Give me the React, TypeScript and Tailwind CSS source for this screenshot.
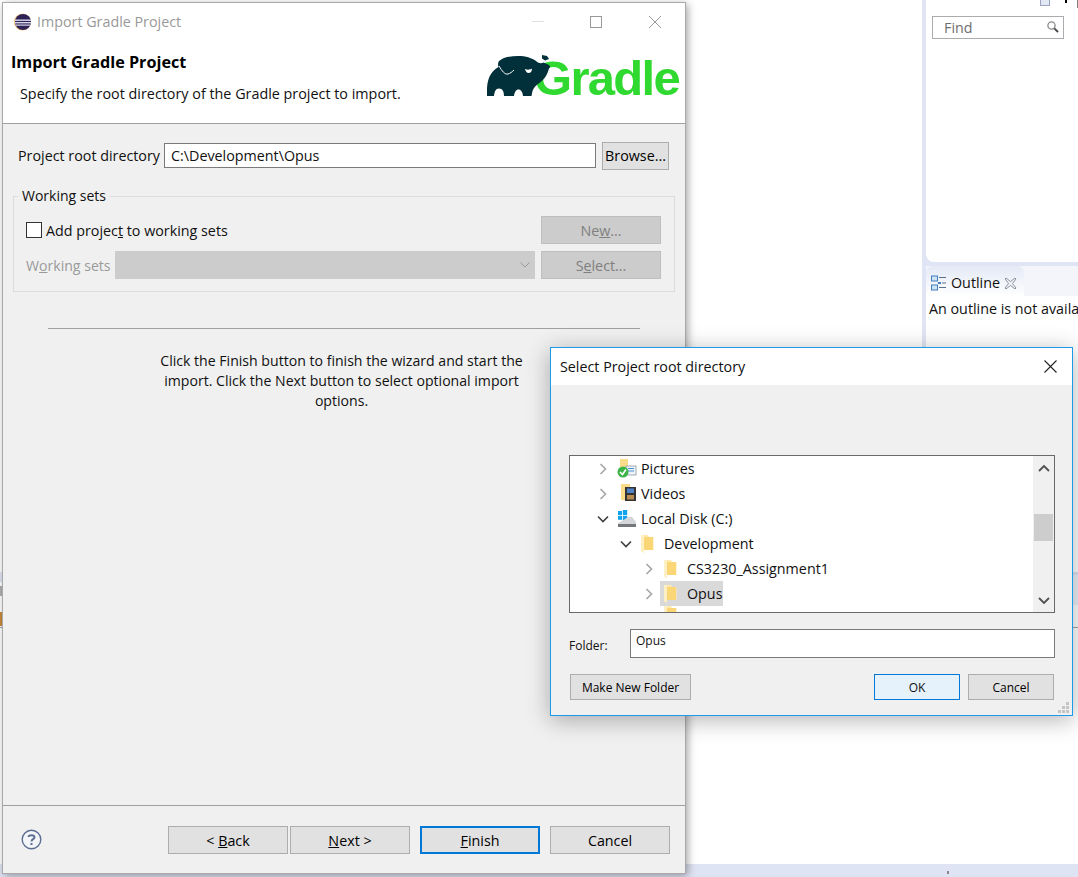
import React from "react";

const font = { fontFamily: '"Open Sans", "Noto Sans", sans-serif' };

function Eclipse() {
  return (
    <svg width="20" height="20" viewBox="0 0 20 20">
      <circle cx="9.5" cy="10" r="8.6" fill="#f4c27c" />
      <circle cx="10" cy="10" r="8" fill="#2c2255" />
      <rect x="2" y="7.5" width="16" height="1.4" fill="#d9d9ec" />
      <rect x="1.8" y="10" width="16.4" height="1.4" fill="#d9d9ec" />
      <rect x="2.6" y="12.5" width="14.8" height="1.2" fill="#d9d9ec" />
    </svg>
  );
}

function Elephant() {
  return (
    <svg width="66" height="44" viewBox="0 0 66 44" className="shrink-0 relative z-10 mb-[1px]">
      <path
        fill="#02303a"
        d="M0 41 C-0.5 32 0.5 24 4 19 C6 15.5 9 13.5 11.5 12 C10.5 9 11 6.5 13.5 5 C18 2 26 0.5 34 1 C41 1.5 47 4 51 7.5 C53 8.5 55 8.5 56.5 7.5 L61 9.5 C63 10.5 64 12 62 13.5 C60.5 19 58 24 53 27.5 C49 30 46.5 33 45.5 36 L44.5 41 L36 41 C35.5 37 34 34.5 31.5 34.5 C29 34.5 27.5 37 27 41 L17 41 C17 36.5 15.5 33.5 12 33.5 C8.5 33.5 7.5 37 7 41 Z"
      />
      <path fill="#02303a" d="M55 0 L60 1 L62 4 L58 5.5 L55 3.5 Z" />
      <path fill="none" stroke="#fff" strokeWidth="1" d="M12 11 C15 16 18 20 21 19 C23 18.5 25 17 27 15" />
      <path fill="#fff" d="M38 14 C40 15 43 15 45 13.5 C45 17 43 18.5 41 18 C39.5 17.5 38.5 16 38 14 Z" />
    </svg>
  );
}

function Folder() {
  return (
    <svg width="13" height="20" viewBox="0 0 13 20" className="shrink-0 -ml-[2px]">
      <path d="M0 1 H7 L8 3 H12.5 V16 H3 V19 L0 17 Z" fill="#ffe9ad" />
      <path d="M3 3 H12 V16 H3 Z" fill="#fbd676" />
      <path d="M0 1 H3 V19 L0 17 Z" fill="#fff0c4" />
    </svg>
  );
}

function Chevron({ open, dark }: { open?: boolean; dark?: boolean }) {
  return (
    <svg width="12" height="12" viewBox="0 0 12 12" className="shrink-0">
      <polyline
        points={open ? "1,3.5 6,8.5 11,3.5" : "3.5,1 8.5,6 3.5,11"}
        fill="none"
        stroke={dark ? "#3f3f3f" : "#a6a6a6"}
        strokeWidth="1.6"
      />
    </svg>
  );
}

function PicturesIcon() {
  return (
    <svg width="20" height="20" viewBox="0 0 20 20" className="shrink-0 -ml-[3px]">
      <path d="M3 0 H11 V15 H3 Z" fill="#fbdc8a" />
      <rect x="9" y="7" width="10" height="9" fill="#eef3f8" stroke="#7d8a98" strokeWidth="0.7" />
      <rect x="11" y="9" width="6" height="1" fill="#4a90d9" />
      <rect x="11" y="11.5" width="6" height="1" fill="#4a90d9" />
      <circle cx="6" cy="13" r="5.5" fill="#3cb44a" />
      <polyline points="3,13 5.5,15.5 9,10.5" fill="none" stroke="#fff" strokeWidth="1.6" />
    </svg>
  );
}

function VideosIcon() {
  return (
    <svg width="18" height="20" viewBox="0 0 18 20" className="shrink-0 -ml-[1px]">
      <path d="M2 0 H11 V17 L2 16 Z" fill="#fbdc8a" />
      <rect x="6" y="3" width="11" height="14" fill="#333" />
      <rect x="8" y="4.5" width="7" height="4.5" fill="#4f81c7" />
      <rect x="8" y="11" width="7" height="4.5" fill="#b98a52" />
    </svg>
  );
}

function DiskIcon() {
  return (
    <svg width="20" height="20" viewBox="0 0 20 20" className="shrink-0 -ml-[3px]">
      <rect x="1" y="2" width="4" height="4" fill="#12a3ee" />
      <rect x="5.8" y="1" width="4.4" height="5" fill="#12a3ee" />
      <rect x="1" y="6.8" width="4" height="4" fill="#12a3ee" />
      <rect x="5.8" y="6.8" width="4.4" height="5" fill="#12a3ee" />
      <path d="M5 12 L11 8 H15 L19 13 V17 H1 V14 Z" fill="#d4d6d8" />
      <rect x="1" y="15" width="18" height="3" fill="#74787c" />
    </svg>
  );
}

function Btn({
  children,
  w,
  primary,
  disabled,
}: {
  children: React.ReactNode;
  w: string;
  primary?: boolean;
  disabled?: boolean;
}) {
  return (
    <div
      className={
        "flex items-center justify-center h-[28px] text-[14.3px] " +
        w +
        (primary
          ? " border-2 border-[#0078d7] bg-[#e1e1e1] text-black"
          : disabled
            ? " border border-[#bfbfbf] bg-[#cccccc] text-[#7f7f7f]"
            : " border border-[#adadad] bg-[#e1e1e1] text-black")
      }
    >
      {children}
    </div>
  );
}

function TreeRow({
  indent,
  chevron,
  icon,
  label,
  selected,
}: {
  indent: string;
  chevron: React.ReactNode;
  icon: React.ReactNode;
  label: string;
  selected?: boolean;
}) {
  return (
    <div className={"flex items-center h-[25px] shrink-0 " + indent}>
      <div className="w-[23px] flex justify-start">{chevron}</div>
      <div className={"flex items-center h-[25px] pl-[6px] pr-[1px] -ml-[6px] " + (selected ? "bg-[#d9d9d9]" : "")}>
        <div className="w-[21px] flex items-center">{icon}</div>
        <span className="text-[14.3px] text-[#111] whitespace-nowrap">{label}</span>
      </div>
    </div>
  );
}

export default function App() {
  return (
    <div className="relative w-[1078px] h-[877px] overflow-hidden bg-white" style={font}>
      {/* desktop background: the workbench behind the dialogs */}
      <div className="flex flex-col w-full h-full">
        <div className="flex-1 flex justify-end items-start">
          <div className="w-[156px] h-[628px] flex flex-col bg-[#dfe5f5] pl-[4px] border-b border-[#a0a0a0]">
            <div className="h-[262px] bg-white rounded-bl-[8px] relative shrink-0">
              <div className="absolute left-[114px] top-0 w-[10px] h-[6px] bg-[#e3e8f5] border border-[#9aa6bf] border-t-0" />
              <div className="absolute left-[139px] top-0 w-[2px] h-[3px] bg-black" />
              <div className="absolute left-[151px] top-0 w-px h-[8px] bg-[#808080]" />
              <div className="absolute left-[6px] top-[16px] w-[132px] h-[23px] bg-white border border-[#ababb0] flex items-center pl-[11px] text-[14.3px] text-[#6d6d6d]">
                Find
                <svg width="14" height="14" viewBox="0 0 14 14" className="absolute right-[3px] top-[3px]">
                  <circle cx="5.5" cy="5.5" r="3.6" fill="#fff" stroke="#8a8a8a" strokeWidth="1.3" />
                  <line x1="8.3" y1="8.3" x2="12" y2="12" stroke="#444" strokeWidth="1.8" />
                </svg>
              </div>
            </div>
            <div className="h-[4px] shrink-0" />
            <div className="flex-1 flex flex-col bg-white">
              <div className="h-[30px] flex bg-[#f3f5fb] shrink-0">
                <div className="w-[98px] flex items-center pl-[5px] pt-[4px] gap-[5px] bg-gradient-to-b from-[#e4e9f5] to-white rounded-tl-[7px] rounded-tr-[7px] text-[14.3px] text-[#111]">
                  <svg width="15" height="16" viewBox="0 0 15 16" className="shrink-0">
                    <rect x="0.5" y="1" width="6" height="5" fill="#cfe3f7" stroke="#3f7fbf" />
                    <rect x="0.5" y="10" width="6" height="5" fill="#cfe3f7" stroke="#3f7fbf" />
                    <rect x="8" y="2" width="7" height="1" fill="#5a6f90" />
                    <rect x="7" y="7" width="3" height="2" fill="#3f7fbf" />
                    <rect x="11" y="7.5" width="4" height="1" fill="#5a6f90" />
                    <rect x="8" y="12" width="7" height="1" fill="#5a6f90" />
                  </svg>
                  Outline
                  <svg width="13" height="13" viewBox="0 0 13 13" className="-ml-[1px] shrink-0">
                    <path
                      d="M2 1 L6.5 4.5 L11 1 L12 2 L8.5 6.5 L12 11 L11 12 L6.5 8.5 L2 12 L1 11 L4.5 6.5 L1 2 Z"
                      fill="#eef0f4"
                      stroke="#8d93a0"
                    />
                  </svg>
                </div>
              </div>
              <div className="pl-[3px] pt-[2px] text-[14.3px] text-[#111] whitespace-nowrap overflow-hidden">
                An outline is not available.
              </div>
            </div>
          </div>
        </div>
        <div className="h-[13px] bg-[#dfe4f4] shrink-0 relative">
          <div className="absolute left-[947px] top-[7px] w-[2px] h-[3px] bg-[#8a8a8a]" />
        </div>
      </div>
      <div className="absolute left-[1073px] top-[572px] w-[5px] h-[33px] bg-[#eef1f9] border-t-[3px] border-[#dfe4f4]" />
      <div className="absolute left-0 top-[572px] w-[2px] h-[10px] bg-[#dfe4f4]" />
      <div className="absolute left-0 top-[586px] w-[2px] h-[10px] bg-[#b0b0b0]" />
      <div className="absolute left-0 top-[612px] w-[2px] h-[14px] bg-[#c98a3c]" />
      <div className="absolute left-0 top-[627px] w-[2px] h-px bg-[#a0a0a0]" />

      {/* Import Gradle Project window */}
      <div className="absolute left-[2px] top-[2px] w-[684px] h-[872px] flex flex-col border border-[#a9a9a9] bg-[#f0f0f0] shadow-[2px_2px_8px_rgba(0,0,0,0.35)]">
        <div className="h-[121px] shrink-0 bg-white border-b border-[#a0a0a0] flex flex-col">
          <div className="h-[37px] shrink-0 flex items-center pl-[10px] text-[14.3px] text-[#999999]">
            <Eclipse />
            <span className="ml-[4px] flex-1">Import Gradle Project</span>
            <div className="w-[12px] h-px bg-[#e0e0e0] mr-[46px]" />
            <div className="w-[12px] h-[12px] border border-[#999] mr-[46px]" />
            <svg width="14" height="14" viewBox="0 0 14 14" className="mr-[23px]">
              <path d="M1 1 L13 13 M13 1 L1 13" stroke="#999" strokeWidth="1" />
            </svg>
          </div>
          <div className="flex flex-1">
            <div className="flex-1">
              <div className="pl-[8px] pt-[11px] text-[16.2px] leading-[22px] font-bold text-black">Import Gradle Project</div>
              <div className="pl-[17px] pt-[11px] text-[14.35px] leading-[20px] text-[#111]">
                Specify the root directory of the Gradle project to import.
              </div>
            </div>
            <div className="flex items-end h-[60px] pt-[14px] pr-[6px]">
              <Elephant />
              <span
                className="text-[#2fd92f] text-[49px] leading-[44px] -ml-[19px] tracking-[-1.7px]"
                style={{ fontFamily: '"Liberation Sans", sans-serif', fontWeight: 700 }}
              >
                Gradle
              </span>
            </div>
          </div>
        </div>

        <div className="flex-1 flex flex-col min-h-0">
          <div className="flex items-center h-[27px] mt-[18px] pl-[15px] pr-[16px] shrink-0">
            <span className="text-[14.3px] text-[#111] w-[146px] whitespace-nowrap">Project root directory</span>
            <div className="w-[432px] h-[25px] bg-white border border-[#7a7a7a] flex items-center pl-[6px] text-[14.3px] text-[#111]">
              C:\Development\Opus
            </div>
            <div className="ml-[6px]">
              <Btn w="w-[67px]">Browse...</Btn>
            </div>
          </div>

          <fieldset className="mt-[18px] ml-[10px] mr-[10px] h-[105px] border border-[#dcdcdc] pl-[12px] pr-[13px] shrink-0">
            <legend className="ml-[-8px] px-[4px] text-[14px] leading-[18px] text-[#111]">Working sets</legend>
            <div className="flex items-center h-[28px] mt-[11px]">
              <div className="w-[16px] h-[16px] bg-white border border-[#333] shrink-0" />
              <span className="ml-[4px] text-[14.3px] text-[#111] flex-1 pt-[2px]">
                Add projec<u>t</u> to working sets
              </span>
              <Btn w="w-[120px]" disabled>
                <span className="pt-[2px]">Ne<u>w</u>...</span>
              </Btn>
            </div>
            <div className="flex items-center h-[28px] mt-[7px]">
              <span className="text-[14.1px] text-[#9a9a9a] w-[89px] shrink-0 whitespace-nowrap pt-[2px]">
                W<u>o</u>rking sets
              </span>
              <div className="w-[420px] h-[28px] bg-[#cccccc] flex items-center justify-end pr-[5px]">
                <svg width="10" height="6" viewBox="0 0 10 6">
                  <polyline points="0.5,0.5 5,5 9.5,0.5" fill="none" stroke="#999" strokeWidth="1" />
                </svg>
              </div>
              <div className="ml-[6px]">
                <Btn w="w-[120px]" disabled>
                  <span className="pt-[2px]">S<u>e</u>lect...</span>
                </Btn>
              </div>
            </div>
          </fieldset>

          <div className="mt-[36px] mx-[45px] h-px w-[592px] bg-[#a0a0a0] shrink-0" />
          <div className="mt-[22px] ml-[155px] w-[367px] text-center text-[14.1px] leading-[20px] text-[#111]">
            Click the Finish button to finish the wizard and start the import. Click the Next button to select optional
            import options.
          </div>
        </div>

        <div className="h-[68px] shrink-0 border-t border-[#a0a0a0] flex items-center pl-[18px] pr-[15px]">
          <svg width="21" height="21" viewBox="0 0 21 21" className="shrink-0">
            <circle cx="10.5" cy="10.5" r="9.3" fill="#f4f5f8" stroke="#5c6f92" strokeWidth="1.4" />
            <path d="M7.5 8 C7.5 5.5 13.5 5.5 13.5 8.2 C13.5 10.2 10.5 10.2 10.5 12.5" fill="none" stroke="#5c6f92" strokeWidth="2" />
            <rect x="9.5" y="14" width="2" height="2" fill="#5c6f92" />
          </svg>
          <div className="flex-1" />
          <div className="flex">
            <Btn w="w-[120px]">
              <span className="pt-[2px]">&lt; <u>B</u>ack</span>
            </Btn>
            <div className="ml-[2px]">
              <Btn w="w-[120px]">
                <span className="pt-[2px]"><u>N</u>ext &gt;</span>
              </Btn>
            </div>
            <div className="ml-[10px]">
              <Btn w="w-[120px]" primary>
                <span className="pt-[2px]"><u>F</u>inish</span>
              </Btn>
            </div>
            <div className="ml-[10px]">
              <Btn w="w-[120px]">
                <span className="pt-[2px]">Cancel</span>
              </Btn>
            </div>
          </div>
        </div>
      </div>

      {/* Select Project root directory dialog */}
      <div className="absolute left-[550px] top-[347px] w-[523px] h-[369px] flex flex-col border border-[#1c9be8] bg-[#f0f0f0] shadow-[0_4px_22px_rgba(0,0,0,0.3)]">
        <div className="h-[37px] shrink-0 bg-white flex items-center pl-[9px] pr-[15px] text-[14.3px] text-[#111]">
          <span className="flex-1">Select Project root directory</span>
          <svg width="13" height="13" viewBox="0 0 13 13">
            <path d="M0.5 0.5 L12.5 12.5 M12.5 0.5 L0.5 12.5" stroke="#222" strokeWidth="1.1" />
          </svg>
        </div>
        <div className="flex-1 flex flex-col pl-[18px] pr-[17px]">
          <div className="mt-[70px] h-[158px] shrink-0 border border-[#696969] bg-white flex overflow-hidden">
            <div className="flex-1 flex flex-col pl-[27px] overflow-hidden">
              <TreeRow indent="" chevron={<Chevron />} icon={<PicturesIcon />} label="Pictures" />
              <TreeRow indent="" chevron={<Chevron />} icon={<VideosIcon />} label="Videos" />
              <TreeRow indent="" chevron={<Chevron open dark />} icon={<DiskIcon />} label="Local Disk (C:)" />
              <TreeRow indent="ml-[23px]" chevron={<Chevron open dark />} icon={<Folder />} label="Development" />
              <TreeRow indent="ml-[46px]" chevron={<Chevron />} icon={<Folder />} label="CS3230_Assignment1" />
              <TreeRow indent="ml-[46px]" chevron={<Chevron />} icon={<Folder />} label="Opus" selected />
              <div className="ml-[69px] mt-[-1px]">
                <Folder />
              </div>
            </div>
            <div className="w-[21px] shrink-0 bg-[#f0f0f0] flex flex-col items-center">
              <svg width="12" height="8" viewBox="0 0 12 8" className="mt-[8px]">
                <polyline points="1,7 6,2 11,7" fill="none" stroke="#505050" strokeWidth="1.8" />
              </svg>
              <div className="w-[19px] h-[27px] bg-[#cdcdcd] mt-[42px]" />
              <div className="flex-1" />
              <svg width="12" height="8" viewBox="0 0 12 8" className="mb-[7px]">
                <polyline points="1,1 6,6 11,1" fill="none" stroke="#505050" strokeWidth="1.8" />
              </svg>
            </div>
          </div>
          <div className="flex items-center mt-[16px] h-[29px] shrink-0">
            <span className="w-[61px] text-[12px] text-[#111] pt-[4px]">Folder:</span>
            <div className="flex-1 h-[29px] bg-white border border-[#7a7a7a] flex items-center pl-[5px] text-[12px] text-[#111] pb-[6px]">
              Opus
            </div>
          </div>
          <div className="flex items-center mt-[16px] pl-px pr-px shrink-0">
            <Btn w="w-[121px] !h-[26px] !text-[12px]">
              <span className="pt-[2px]">Make New Folder</span>
            </Btn>
            <div className="flex-1" />
            <div className="w-[86px] h-[26px] border border-[#0078d7] bg-[#e5f1fb] flex items-center justify-center text-[12px] text-[#111] pt-[2px]">
              OK
            </div>
            <div className="ml-[8px]">
              <Btn w="w-[86px] !h-[26px] !text-[12px]">
                <span className="pt-[2px]">Cancel</span>
              </Btn>
            </div>
          </div>
        </div>
        <svg width="11" height="11" viewBox="0 0 11 11" className="absolute right-[3px] bottom-[2px]">
          <g fill="#c4c4c4">
            <rect x="8" y="0" width="3" height="3" />
            <rect x="4" y="4" width="3" height="3" />
            <rect x="8" y="4" width="3" height="3" />
            <rect x="0" y="8" width="3" height="3" />
            <rect x="4" y="8" width="3" height="3" />
            <rect x="8" y="8" width="3" height="3" />
          </g>
        </svg>
      </div>
    </div>
  );
}
